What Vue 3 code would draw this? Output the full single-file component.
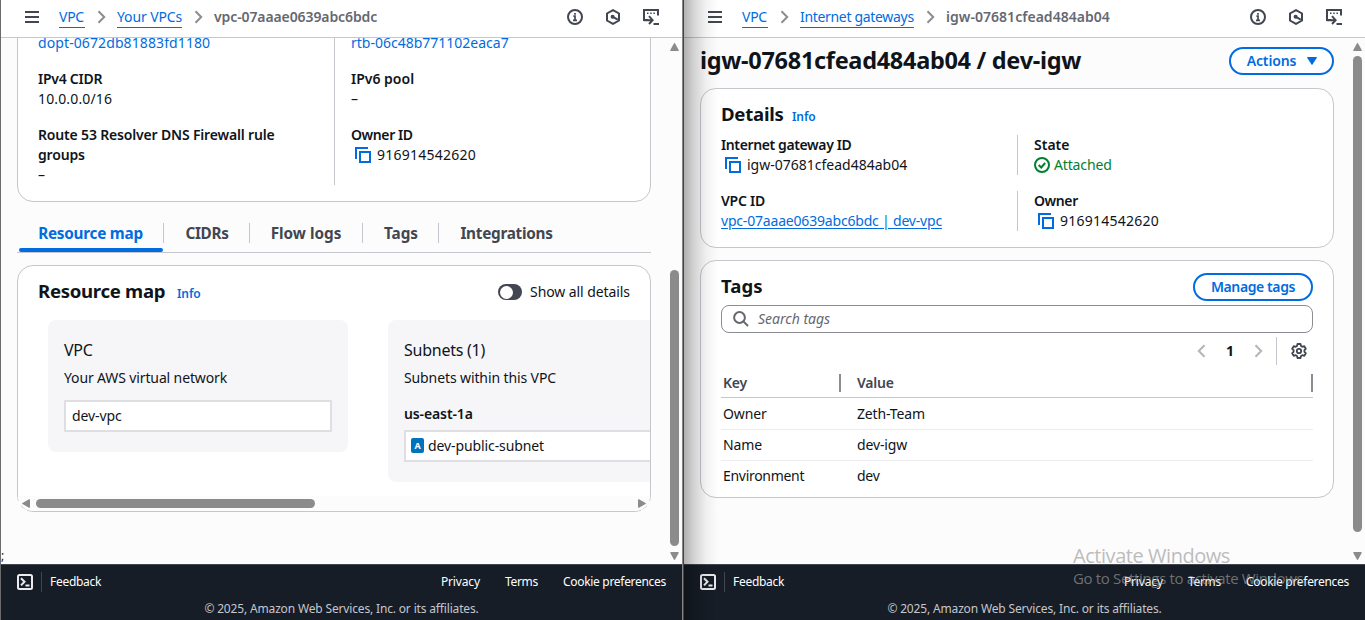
<script setup>
const windows = [
  { id: 'vpc', parent: 'Your VPCs', current: 'vpc-07aaae0639abc6bdc' },
  { id: 'igw', parent: 'Internet gateways', current: 'igw-07681cfead484ab04' },
]
const tabs = ['Resource map', 'CIDRs', 'Flow logs', 'Tags', 'Integrations']
const tags = [
  { key: 'Owner', value: 'Zeth-Team' },
  { key: 'Name', value: 'dev-igw' },
  { key: 'Environment', value: 'dev' },
]
</script>

<template>
  <div class="desktop">
    <section v-for="w in windows" :key="w.id" class="window" :class="w.id">
      <header class="nav">
        <svg class="burger" width="14" height="12" viewBox="0 0 14 12"><path d="M0 1h14M0 6h14M0 11h14" /></svg>
        <a class="crumb root">VPC</a>
        <svg class="chev" width="9" height="14" viewBox="0 0 9 14"><path d="M1.5 1.2 7.2 7l-5.7 5.8" /></svg>
        <a class="crumb parent">{{ w.parent }}</a>
        <svg class="chev" width="9" height="14" viewBox="0 0 9 14"><path d="M1.5 1.2 7.2 7l-5.7 5.8" /></svg>
        <span class="current">{{ w.current }}</span>
        <div class="tools">
          <svg width="16" height="16" viewBox="0 0 16 16"><circle cx="8" cy="8" r="7" /><path d="M6.4 7.2H8V12M6 11.3h4M8 4v1.7" stroke-width="1.7" /></svg>
          <svg width="16" height="16" viewBox="0 0 16 16"><path d="M8 1.1 14 4.5v7L8 14.9 2 11.5v-7z" /><circle cx="7.6" cy="7.7" r="1.4" fill="#424650" stroke-width="1.2" /><path d="m8.2 8.2 4.6 2.4" /></svg>
          <svg width="17" height="16" viewBox="0 0 17 16"><path d="M5.5 11H1V1h14v5.5M1 11.2h8.2M6 7.2l3.6 4L6 15M10.5 15H16" /><path d="M4 4.2h1.5M7.2 4.2h1.5M10.4 4.2h1.5" stroke-width="1.6" /></svg>
        </div>
      </header>

      <main v-if="w.id === 'vpc'" class="page vpc-page">
        <div class="card summary">
          <div class="col first">
            <a class="dopt">dopt-0672db81883fd1180</a>
            <div class="pair"><b class="l-cidr">IPv4 CIDR</b><span class="num">10.0.0.0/16</span></div>
            <div class="pair"><b class="l-route">Route 53 Resolver DNS Firewall rule groups</b><span>–</span></div>
          </div>
          <div class="col second">
            <a>rtb-06c48b771102eaca7</a>
            <div class="pair"><b>IPv6 pool</b><span>–</span></div>
            <div class="pair">
              <b class="l-owner">Owner ID</b>
              <span class="copy"><svg width="16" height="16" viewBox="0 0 16 16"><path d="M1 12V1h12M5 5h10v10H5z" /></svg><i>916914542620</i></span>
            </div>
          </div>
        </div>

        <nav class="tabs">
          <div v-for="(t, i) in tabs" :key="t" class="tab" :class="['t' + i, { on: i === 0 }]"><span>{{ t }}</span></div>
        </nav>

        <div class="map-wrap">
          <div class="card map">
            <div class="map-head">
              <h2>Resource map</h2><a class="info">Info</a>
              <span class="toggle"></span><span class="toggle-label">Show all details</span>
            </div>
            <div class="lanes">
              <div class="lane">
                <h3>VPC</h3>
                <p class="aws">Your AWS virtual network</p>
                <div class="node">dev-vpc</div>
              </div>
              <div class="lane">
                <h3 class="subs">Subnets (1)</h3>
                <p class="within">Subnets within this VPC</p>
                <b class="zone">us-east-1a</b>
                <div class="node subnet"><span class="zone-badge">A</span>dev-public-subnet</div>
              </div>
            </div>
            <div class="hscroll">
              <svg width="8" height="9" viewBox="0 0 8 9"><path d="M7 .3Q8 0 8 1v7q0 1-1 .7L.5 5.1q-.8-.6 0-1.2z" /></svg>
              <div class="hthumb"></div>
              <svg class="r" width="8" height="9" viewBox="0 0 8 9"><path d="M1 .3Q0 0 0 1v7q0 1 1 .7l6.5-3.6q.8-.6 0-1.2z" /></svg>
            </div>
          </div>
        </div>
        <span class="stray">;</span>
      </main>

      <main v-else class="page igw-page">
        <div class="title-row">
          <h1>igw-07681cfead484ab04 / dev-igw</h1>
          <button class="btn actions">Actions<svg width="10" height="8" viewBox="0 0 10 8"><path d="M0 .5Q0 0 .6 0h8.8q.6 0 .6.5L5.5 7.6q-.5.6-1 0z" /></svg></button>
        </div>
        <div class="card details">
          <div class="head"><h2 class="h-details">Details</h2><a class="info">Info</a></div>
          <div class="grid">
            <div class="pair">
              <b class="l-igw">Internet gateway ID</b>
              <span class="copy"><svg width="16" height="16" viewBox="0 0 16 16"><path d="M1 12V1h12M5 5h10v10H5z" /></svg><em>igw-07681cfead484ab04</em></span>
            </div>
            <div class="pair ruled">
              <b>State</b>
              <span class="ok"><svg width="16" height="16" viewBox="0 0 16 16"><circle cx="8" cy="8" r="7" /><path d="m4.7 8 2.5 2.5 4-4.5" /></svg>Attached</span>
            </div>
            <div class="pair"><b class="l-cidr">VPC ID</b><a class="vpc-link">vpc-07aaae0639abc6bdc | dev-vpc</a></div>
            <div class="pair ruled">
              <b class="l-own">Owner</b>
              <span class="copy"><svg width="16" height="16" viewBox="0 0 16 16"><path d="M1 12V1h12M5 5h10v10H5z" /></svg><i>916914542620</i></span>
            </div>
          </div>
        </div>
        <div class="card tags">
          <div class="tags-head"><h2 class="h-tags">Tags</h2><button class="btn manage">Manage tags</button></div>
          <div class="search">
            <svg width="16" height="16" viewBox="0 0 16 16"><circle cx="6.5" cy="6.5" r="5.4" /><path d="m10.4 10.4 4.6 4.6" /></svg>
            <span>Search tags</span>
          </div>
          <div class="pager">
            <svg class="pg" width="9" height="14" viewBox="0 0 9 14"><path d="M7.5 1.2 1.8 7l5.7 5.8" /></svg>
            <b>1</b>
            <svg class="pg" width="9" height="14" viewBox="0 0 9 14"><path d="M1.5 1.2 7.2 7l-5.7 5.8" /></svg>
            <span class="bar"></span>
            <svg class="gear" width="16" height="16" viewBox="0 0 16 16"><path d="M6.5 1h3l.5 2 1.3.8 2-.6 1.500 2.600L13.400 7.200v1.600l1.400 1.400-1.500 2.600-2-.6-1.300.8-.5 2h-3l-.5-2-1.300-.8-2 .6-1.500-2.600 1.400-1.400V7.200L1.200 5.800l1.500-2.600 2 .6L6 3z" /><circle cx="8" cy="8" r="2.200" /></svg>
          </div>
          <div class="row thead"><span class="k">Key</span><span class="v">Value</span></div>
          <div v-for="t in tags" :key="t.key" class="row"><span class="k">{{ t.key }}</span><span class="v">{{ t.value }}</span></div>
        </div>
      </main>

      <div class="vscroll">
        <svg width="9" height="8" viewBox="0 0 9 8"><path d="M.3 7Q0 8 1 8h7q1 0 .7-1L5.1.5q-.6-.8-1.2 0z" /></svg>
        <div class="vtrack"><div class="vthumb"></div></div>
        <svg width="9" height="8" viewBox="0 0 9 8"><path d="M.3 1Q0 0 1 0h7q1 0 .7 1L5.1 7.5q-.6.8-1.2 0z" /></svg>
      </div>

      <footer class="foot">
        <div class="foot-row">
          <svg width="16" height="16" viewBox="0 0 16 16"><rect x="1" y="1" width="14" height="14" rx="1.5" /><path d="m4 4.2 3.5 3.6L4 11.4M8.5 11.6h4" /></svg>
          <span class="feedback">Feedback</span>
          <span class="privacy">Privacy</span><span class="terms">Terms</span><span class="cookie">Cookie preferences</span>
        </div>
        <div class="legal">© 2025, Amazon Web Services, Inc. or its affiliates.</div>
      </footer>
      <div v-if="w.id === 'igw'" class="shade"></div>
    </section>

    <div class="watermark"><div class="wm1">Activate Windows</div><div class="wm2">Go to Settings to activate Windows.</div></div>
  </div>
</template>

<style>
html, body { margin: 0; overflow: hidden; }
</style>

<style scoped>
.desktop { position: relative; display: flex; width: 1365px; height: 620px; overflow: hidden; font: 400 14px/20px "Noto Sans", "Open Sans", sans-serif; color: #0f141a; }
.desktop * { box-sizing: border-box; }
.window { position: relative; display: grid; grid-template: 38px 526px 56px / minmax(0, 1fr) 14px; width: 683px; height: 620px; flex: none; background: #fcfcfd; border-left: 1px solid #6b6b6b; }
.window.vpc { border-right: 1px solid #858585; }
.window.igw { width: 682px; border-left-color: #444; }
svg { display: block; flex: none; fill: none; }
b { font-weight: 600; }
a { color: #006ce0; }
h1, h2, h3, p { margin: 0; }
i, em { font-style: normal; }

.nav { grid-column: 1 / 3; display: flex; align-items: center; padding: 0 22px 4px 24px; background: #fff; border-bottom: 1px solid #c6c6cd; }
.burger { stroke: #424650; stroke-width: 2; margin-right: 20px; }
.crumb { line-height: 18px; height: 20px; border-bottom: 1px solid #006ce0; margin-top: 3px; white-space: nowrap; }
.root { width: 26px; letter-spacing: -.25px; }
.parent { letter-spacing: -.12px; width: 65px; }
.igw .parent { letter-spacing: -.32px; width: 114px; }
.chev { stroke: #8c8c94; stroke-width: 2; margin: 0 11px 0 12px; }
.current { font-weight: 600; color: #656871; letter-spacing: -.1px; }
.igw .current { letter-spacing: .03px; }
.tools { display: flex; gap: 22px; margin-left: auto; stroke: #424650; stroke-width: 2; }

.page { overflow: hidden; }
.card { background: #fff; border: 1px solid #c6c6cd; border-radius: 16px; }
.pair { display: flex; flex-direction: column; }
.copy, .ok { display: flex; align-items: center; }
.copy svg { margin: 0 6px 0 4px; stroke: #006ce0; stroke-width: 2; }
.copy i { letter-spacing: .24px; }
.num { letter-spacing: .14px; }
.l-cidr { letter-spacing: -.25px; }
.l-route { letter-spacing: -.17px; }
.l-owner { letter-spacing: -.4px; }
.l-own { letter-spacing: -.4px; }
.l-igw { letter-spacing: -.38px; }

.vpc-page { position: relative; padding-left: 16px; }
.summary { display: flex; width: 634px; height: 180px; margin-top: -16px; padding: 10px 20px 0; }
.col { display: flex; flex-direction: column; gap: 16px; height: 152px; }
.first { width: 297px; padding-right: 50px; border-right: 1px solid #c6c6cd; }
.second { padding-left: 16px; }
.dopt { letter-spacing: .1px; }

.tabs { display: flex; width: 634px; height: 51px; padding-top: 12px; border-bottom: 1px solid #c6c6cd; }
.tab { display: flex; justify-content: center; height: 38px; padding-top: 9px; font-size: 15.3px; font-weight: 700; line-height: 20px; color: #424650; position: relative; }
.tab:not(:last-child)::after { content: ""; position: absolute; right: 0; top: 9px; width: 1px; height: 20px; background: #c6c6cd; }
.t0 { width: 147px; letter-spacing: -.25px; }
.t0::before { content: ""; position: absolute; left: 2px; right: 1px; bottom: 0; height: 4px; border-radius: 3px; background: #006ce0; }
.tab.on { color: #006ce0; }
.t1 { width: 86px; letter-spacing: -.3px; }
.t2 { width: 113px; padding-right: 1px; }
.t3 { width: 76px; }
.t4 { width: 135px; letter-spacing: -.27px; }

.map-wrap { position: relative; width: 634px; }
.map-wrap::before, .map-wrap::after { content: ""; position: absolute; z-index: 1; bottom: 0; width: 10px; height: 11px; background: #fcfcfd; }
.map-wrap::before { left: 0; clip-path: polygon(0 0, 40% 0, 40% 60%, 100% 80%, 100% 100%, 0 100%); }
.map-wrap::after { right: 0; clip-path: polygon(60% 0, 100% 0, 100% 100%, 0 100%, 0 80%, 60% 60%); }
.map { position: relative; width: 634px; height: 247px; margin-top: 12px; overflow: hidden; }
.map-head { display: flex; align-items: center; height: 54px; padding: 0 20px 2px; }
h2 { font-size: 18.6px; font-weight: 700; line-height: 24px; letter-spacing: -.3px; white-space: nowrap; }
.map-head h2 { width: 128px; margin-top: -2px; }
.info { font-size: 12px; font-weight: 600; letter-spacing: -.1px; margin-left: 11px; margin-top: 3px; }
.toggle { width: 24px; height: 16px; border-radius: 8px; background: #424650; margin-left: auto; padding: 1.5px 2px; }
.toggle::before { content: ""; display: block; width: 13px; height: 13px; border-radius: 50%; background: #fff; }
.toggle-label { margin-left: 8px; letter-spacing: -.08px; }
.lanes { display: flex; align-items: flex-start; gap: 40px; padding-left: 30px; }
.lane { width: 300px; flex: none; padding: 19px 16px 20px; border-radius: 8px; background: #f6f6f9; }
h3 { font-size: 16px; font-weight: 400; line-height: 22px; letter-spacing: -.25px; }
.lane p { margin-top: 7px; line-height: 20px; }
.aws { letter-spacing: -.13px; }
.within { letter-spacing: -.11px; }
.node { display: flex; align-items: center; width: 268px; height: 32px; margin-top: 12px; padding-left: 6px; border: 2px solid #dedee3; background: #fff; letter-spacing: -.1px; }
.zone { display: block; margin-top: 16px; letter-spacing: -.12px; }
.subnet { margin-top: 6px; padding-left: 5px; }
.zone-badge { width: 13px; height: 15px; margin-right: 4px; margin-top: -2px; border-radius: 2px; background: #0073bb; color: #fff; font-size: 9px; font-weight: 700; line-height: 16px; text-align: center; letter-spacing: 0; }
.hscroll { position: absolute; left: 0; right: 0; bottom: 0; height: 15px; display: flex; align-items: center; padding: 0 4px; background: #fcfcfd; }
.hscroll svg, .vscroll svg { fill: #8b8b8b; }
.hthumb { width: 279px; height: 9px; margin-left: 6px; border-radius: 5px; background: #8b8b8b; }
.hscroll .r { margin-left: auto; }
.stray { position: absolute; left: 0; top: 508px; font-size: 12px; }

.igw-page { padding: 9px 0 0 16px; }
.title-row { display: flex; justify-content: space-between; align-items: center; width: 634px; height: 28px; }
h1 { font-size: 23.5px; font-weight: 700; line-height: 28px; letter-spacing: -.3px; margin-top: -3px; }
.btn { display: flex; align-items: center; justify-content: center; height: 28px; border: 2px solid #006ce0; border-radius: 14px; background: #fff; color: #006ce0; font: 600 14px/20px "Noto Sans", sans-serif; padding: 0; }
.actions { width: 105px; gap: 11px; letter-spacing: -.15px; padding-left: 1px; }
.actions svg { fill: #006ce0; }
.manage { width: 120px; letter-spacing: -.4px; }
.details { width: 634px; height: 160px; margin-top: 13px; padding: 10px 20px; }
.head { display: flex; align-items: center; height: 30px; }
.head .info { margin-left: 8px; margin-top: 6px; }
.h-details { letter-spacing: -.25px; width: 63px; }
.grid { display: grid; grid-template-columns: 296px 1fr; row-gap: 16px; margin-top: 6px; }
.ruled { border-left: 1px solid #c6c6cd; padding-left: 16px; }
.ok { gap: 4px; color: #00802f; letter-spacing: -.15px; }
.ok svg { stroke: #00802f; stroke-width: 2; }
.vpc-link { letter-spacing: -.19px; text-decoration: underline; text-underline-offset: 2px; }
.tags { width: 634px; height: 238px; margin-top: 12px; padding: 12px 20px; }
.tags-head { display: flex; justify-content: space-between; align-items: center; height: 28px; }
.h-tags { letter-spacing: 0; margin-top: -2px; }
.search { display: flex; align-items: center; gap: 9px; height: 28px; margin-top: 4px; padding-left: 11px; border: 1px solid #8c8c94; border-radius: 8px; color: #656871; font-style: italic; }
.search svg { stroke: #656871; stroke-width: 2; }
.pager { display: flex; align-items: center; justify-content: flex-end; height: 28px; margin-top: 4px; padding-right: 6px; }
.pg { stroke: #b4b4bb; stroke-width: 2; }
.pager b { width: 48px; text-align: center; font-weight: 700; }
.bar { width: 1px; height: 28px; margin: 0 14px 0 13px; background: #c6c6cd; }
.gear { stroke: #424650; stroke-width: 1.8; stroke-linejoin: round; }
.row { display: grid; grid-template-columns: 134px 1fr; height: 31px; line-height: 29px; padding-left: 2px; border-bottom: 1px solid #ebebf0; letter-spacing: -.15px; }
.thead { height: 33px; font-weight: 600; line-height: 36px; color: #424650; border-color: #c6c6cd; position: relative; letter-spacing: -.2px; }
.thead + .row { height: 32px; line-height: 32px; }
.row:last-child { border-bottom: 0; letter-spacing: -.3px; }
.thead span::after { content: ""; position: absolute; top: 9px; width: 2px; height: 18px; background: #8c8c94; }
.thead .k::after { left: 118px; }
.thead .v::after { right: 0; }

.vscroll { display: flex; flex-direction: column; align-items: center; padding: 5px 3px 4px 0; }
.vscroll svg { margin-left: 2px; }
.vtrack { flex: 1; width: 9px; margin: 5px 0 6px 2px; }
.vthumb { width: 9px; height: 276px; margin-top: 214px; border-radius: 5px; background: #8b8b8b; }
.igw .vthumb { height: 476px; margin-top: 0; }

.foot { grid-column: 1 / 3; background: #161d26; border-top: 1px solid #424650; color: #fff; font-size: 12px; }
.foot-row { display: flex; align-items: center; height: 34px; padding: 0 16px; white-space: nowrap; }
.foot svg { stroke: #ebebf0; stroke-width: 2; }
.feedback { margin-left: 8px; padding-left: 8px; border-left: 1px solid #424650; letter-spacing: -.28px; }
.privacy { margin-left: auto; letter-spacing: -.15px; }
.terms { margin: 0 25px; letter-spacing: -.3px; }
.cookie { letter-spacing: -.3px; }
.legal { text-align: center; letter-spacing: -.16px; color: #c6c6cd; }
.shade { position: absolute; inset: 0 auto 0 0; width: 34px; background: linear-gradient(90deg, rgba(0,0,0,.3), rgba(0,0,0,.16) 30%, rgba(0,0,0,.05) 65%, transparent); }

.watermark { position: absolute; left: 1073px; top: 544px; font-family: "Open Sans", sans-serif; white-space: nowrap; pointer-events: none; }
.wm1 { font-size: 20px; line-height: 24px; letter-spacing: -.45px; color: #bcbcbc; }
.wm2 { font-size: 15px; line-height: 20px; letter-spacing: -.34px; color: rgba(170,170,170,.6); }
</style>
